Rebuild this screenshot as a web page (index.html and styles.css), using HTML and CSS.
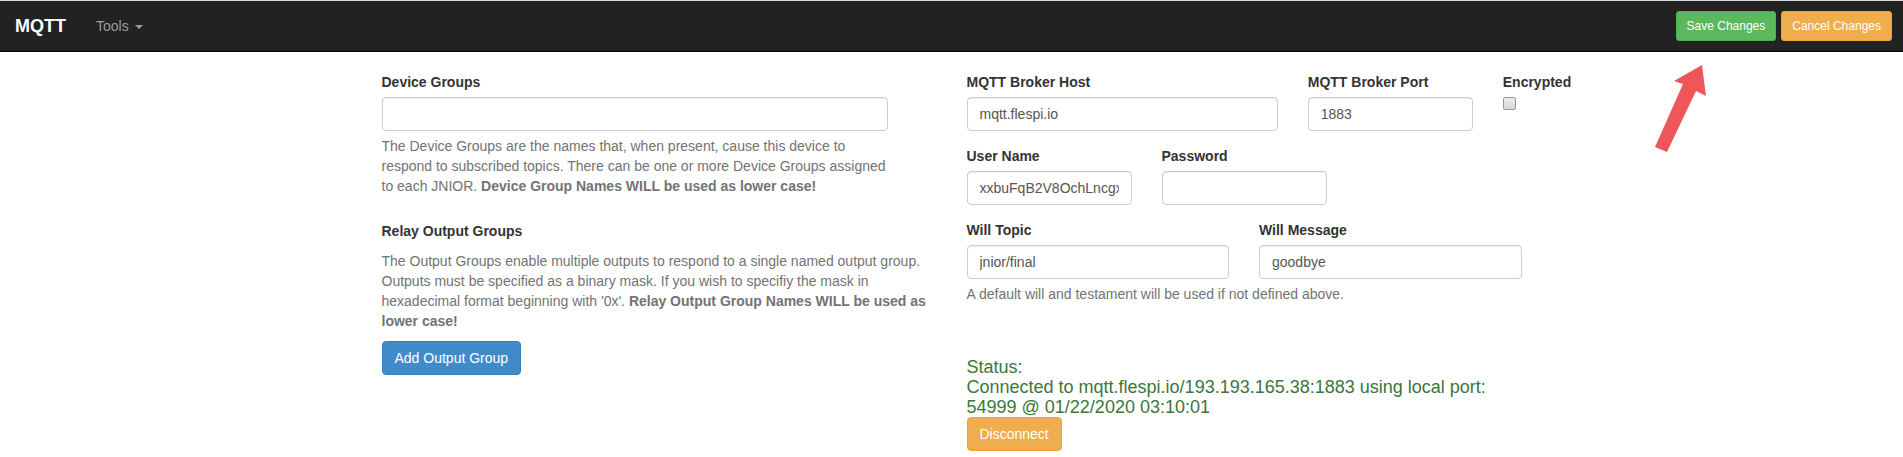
FILE: index.html
```html
<!DOCTYPE html>
<html lang="en">
<head>
    <meta charset="UTF-8">
    <meta name="viewport" content="width=device-width, initial-scale=1.0">
    <title>MQTT</title>
    <link rel="stylesheet" href="styles.css">
</head>
<body>
    <nav class="navbar">
        <a class="brand" href="#">MQTT</a>
        <a class="nav-link" href="#">Tools <span class="caret"></span></a>
        <div class="nav-actions">
            <button type="button" class="btn btn-sm btn-success">Save Changes</button>
            <button type="button" class="btn btn-sm btn-warning">Cancel Changes</button>
        </div>
    </nav>

    <!-- pointer drawn over the page towards the save button -->
    <svg class="pointer" width="1903" height="457" viewBox="0 0 1903 457">
        <polygon points="1702,65 1706,96 1696,91 1667,152 1655,147 1683,84 1674,81" fill="#f0555a"/>
    </svg>

    <div class="container">
        <div class="column">
            <div class="form-group narrow">
                <label for="deviceGroups">Device Groups</label>
                <input type="text" id="deviceGroups" class="form-control">
                <p class="help-block">The Device Groups are the names that, when present, cause this device to respond to subscribed topics. There can be one or more Device Groups assigned to each JNIOR. <b>Device Group Names WILL be used as lower case!</b></p>
            </div>

            <div class="form-group">
                <label>Relay Output Groups</label>
                <p class="help-text">The Output Groups enable multiple outputs to respond to a single named output group. Outputs must be specified as a binary mask. If you wish to specifiy the mask in hexadecimal format beginning with '0x'. <b>Relay Output Group Names WILL be used as lower case!</b></p>
                <button type="button" class="btn btn-primary">Add Output Group</button>
            </div>
        </div>

        <div class="column">
            <div class="grid">
                <div class="span-7">
                    <label for="brokerHost">MQTT Broker Host</label>
                    <input type="text" id="brokerHost" class="form-control" value="mqtt.flespi.io">
                </div>
                <div class="span-4">
                    <label for="brokerPort">MQTT Broker Port</label>
                    <input type="text" id="brokerPort" class="form-control" value="1883">
                </div>
                <div class="span-1">
                    <label for="encrypted" class="nowrap">Encrypted</label>
                    <input type="checkbox" id="encrypted" class="check">
                </div>

                <div class="span-4">
                    <label for="userName">User Name</label>
                    <input type="text" id="userName" class="form-control" value="xxbuFqB2V8OchLncgxVmTq">
                </div>
                <div class="span-4">
                    <label for="password">Password</label>
                    <input type="password" id="password" class="form-control">
                </div>
                <div class="span-4"></div>

                <div class="span-6">
                    <label for="willTopic">Will Topic</label>
                    <input type="text" id="willTopic" class="form-control" value="jnior/final">
                </div>
                <div class="span-6">
                    <label for="willMessage">Will Message</label>
                    <input type="text" id="willMessage" class="form-control" value="goodbye">
                </div>
            </div>
            <p class="help-block">A default will and testament will be used if not defined above.</p>

            <div class="status">Status:<br>Connected to mqtt.flespi.io/193.193.165.38:1883 using local port: 54999 @ 01/22/2020 03:10:01</div>
            <button type="button" class="btn btn-warning">Disconnect</button>
        </div>
    </div>
</body>
</html>
```

FILE: styles.css
```css
body {
    font-family: "Liberation Sans", Arial, sans-serif;
    font-size: 14px;
    line-height: 20px;
    color: #333;
    background-color: #fff;
    margin: 0;
}

.navbar {
    display: flex;
    align-items: center;
    height: 50px;
    background-color: #222;
    border-top: 1px solid #d9d9d9;
    border-bottom: 1px solid #080808;
    margin-bottom: 20px;
}

.brand {
    color: #fff;
    font-size: 18px;
    font-weight: bold;
    line-height: 20px;
    padding: 15px;
    text-decoration: none;
}

.nav-link {
    color: #9d9d9d;
    padding: 15px;
    text-decoration: none;
}

.caret {
    display: inline-block;
    width: 0;
    height: 0;
    margin-left: 2px;
    vertical-align: middle;
    border-top: 4px solid;
    border-left: 4px solid transparent;
    border-right: 4px solid transparent;
}

.nav-actions {
    margin-left: auto;
    display: flex;
    gap: 5px;
    padding-right: 11px;
}

.pointer {
    position: absolute;
    top: 0;
    left: 0;
    pointer-events: none;
}

.btn {
    font-family: inherit;
    font-size: 14px;
    line-height: 20px;
    padding: 6px 12px;
    border: 1px solid transparent;
    border-radius: 4px;
    color: #fff;
    cursor: pointer;
}

.btn-sm {
    font-size: 12px;
    line-height: 18px;
    padding: 5px 10px;
    border-radius: 3px;
}

.btn-primary {
    background-color: #428bca;
    border-color: #357ebd;
}

.btn-success {
    background-color: #5cb85c;
    border-color: #4cae4c;
}

.btn-warning {
    background-color: #f0ad4e;
    border-color: #eea236;
}

.container {
    width: 1140px;
    margin: 0 auto;
    display: flex;
    gap: 30px;
}

.column {
    flex: 0 0 555px;
}

.form-group {
    display: flow-root;
    margin-bottom: 15px;
}

.narrow {
    width: 506px;
}

label {
    display: block;
    font-weight: bold;
    margin-bottom: 5px;
}

.nowrap {
    white-space: nowrap;
}

.form-control {
    display: block;
    box-sizing: border-box;
    width: 100%;
    height: 34px;
    padding: 6px 12px;
    font-family: inherit;
    font-size: 14px;
    line-height: 20px;
    color: #555;
    background-color: #fff;
    border: 1px solid #ccc;
    border-radius: 4px;
    box-shadow: inset 0 1px 1px rgba(0, 0, 0, 0.075);
}

.help-block {
    color: #737373;
    margin: 5px 0 10px;
}

.help-text {
    color: #737373;
    margin: 10px 0 10px;
}

.grid {
    display: grid;
    grid-template-columns: repeat(12, minmax(0, 1fr));
    column-gap: 30px;
    row-gap: 15px;
}

.span-1 { grid-column: span 1; }
.span-4 { grid-column: span 4; }
.span-6 { grid-column: span 6; }
.span-7 { grid-column: span 7; }

.check {
    appearance: none;
    display: block;
    width: 13px;
    height: 13px;
    margin: 4px 0 0;
    border: 1px solid #9a9a9a;
    border-radius: 2px;
    background: linear-gradient(#ececec, #d6d6d6);
}

.status {
    color: #3c763d;
    font-size: 18px;
    line-height: 1.1;
    margin-top: 54px;
}
```
